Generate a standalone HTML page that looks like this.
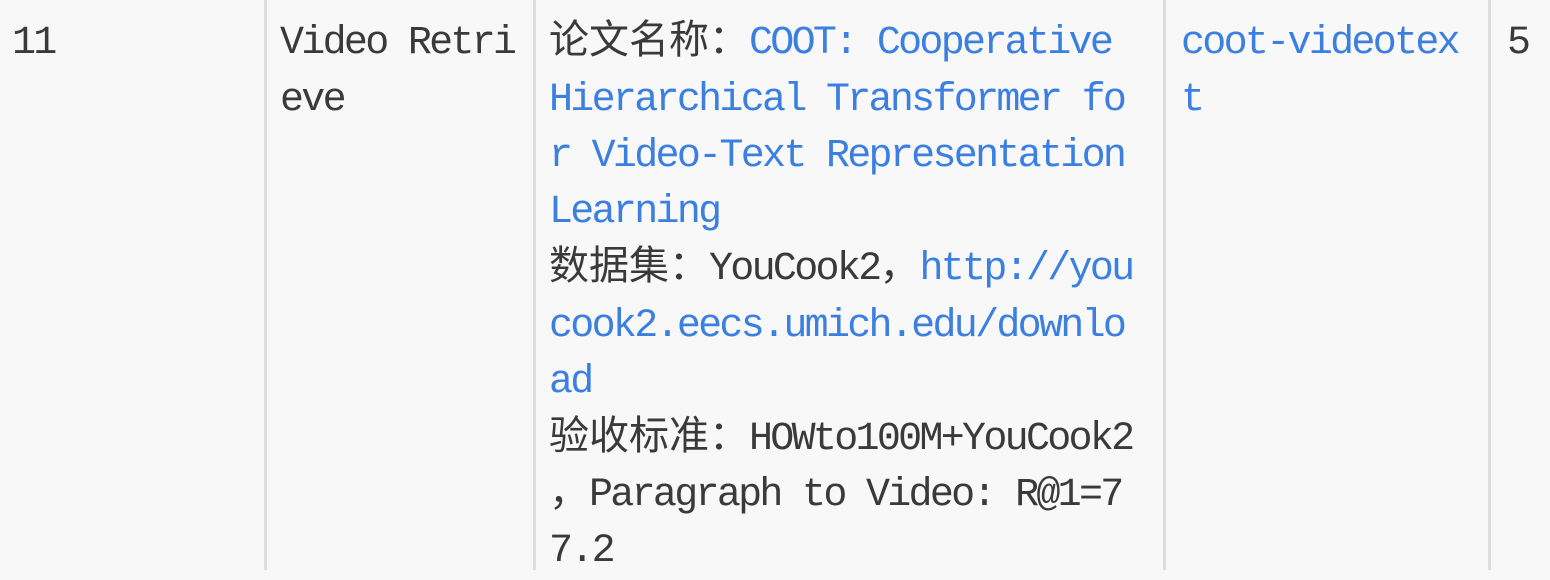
<!DOCTYPE html>
<html><head><meta charset="utf-8"><style>
html,body{margin:0;padding:0;width:1550px;height:570px;overflow:hidden;background:#f8f8f8;}
.b{position:absolute;top:0;height:570px;width:3px;background:#dcdcdc;}
.l{position:absolute;white-space:pre;font-family:"Liberation Mono",monospace;font-size:40px;letter-spacing:-2.7px;line-height:56px;height:56px;color:#3a3a3a;}
.c{font-family:"Noto Sans CJK SC",sans-serif;letter-spacing:0;line-height:0;}
.a{color:#3b7fe0;}
</style></head><body>
<div class="b" style="left:264px"></div>
<div class="b" style="left:533px"></div>
<div class="b" style="left:1163px"></div>
<div class="b" style="left:1488px"></div>

<div class="l" style="left:12px;top:16px">11</div>
<div class="l" style="left:280px;top:16px">Video Retri</div>
<div class="l" style="left:280px;top:73px">eve</div>

<div class="l" style="left:549px;top:16px"><span class="c">论文名称：</span><span class="a">COOT: Cooperative</span></div>
<div class="l a" style="left:549px;top:73px">Hierarchical Transformer fo</div>
<div class="l a" style="left:549px;top:129px">r Video-Text Representation</div>
<div class="l a" style="left:549px;top:185px">Learning</div>
<div class="l" style="left:549px;top:242px"><span class="c">数据集：</span>YouCook2<span class="c">，</span><span class="a">http://you</span></div>
<div class="l a" style="left:549px;top:299px">cook2.eecs.umich.edu/downlo</div>
<div class="l a" style="left:549px;top:355px">ad</div>
<div class="l" style="left:549px;top:412px"><span class="c">验收标准：</span>HOWto100M+YouCook2</div>
<div class="l" style="left:549px;top:468px"><span class="c">，</span>Paragraph to Video: R@1=7</div>
<div class="l" style="left:549px;top:524px">7.2</div>

<div class="l a" style="left:1181px;top:16px">coot-videotex</div>
<div class="l a" style="left:1181px;top:73px">t</div>

<div class="l" style="left:1507px;top:16px">5</div>
</body></html>
